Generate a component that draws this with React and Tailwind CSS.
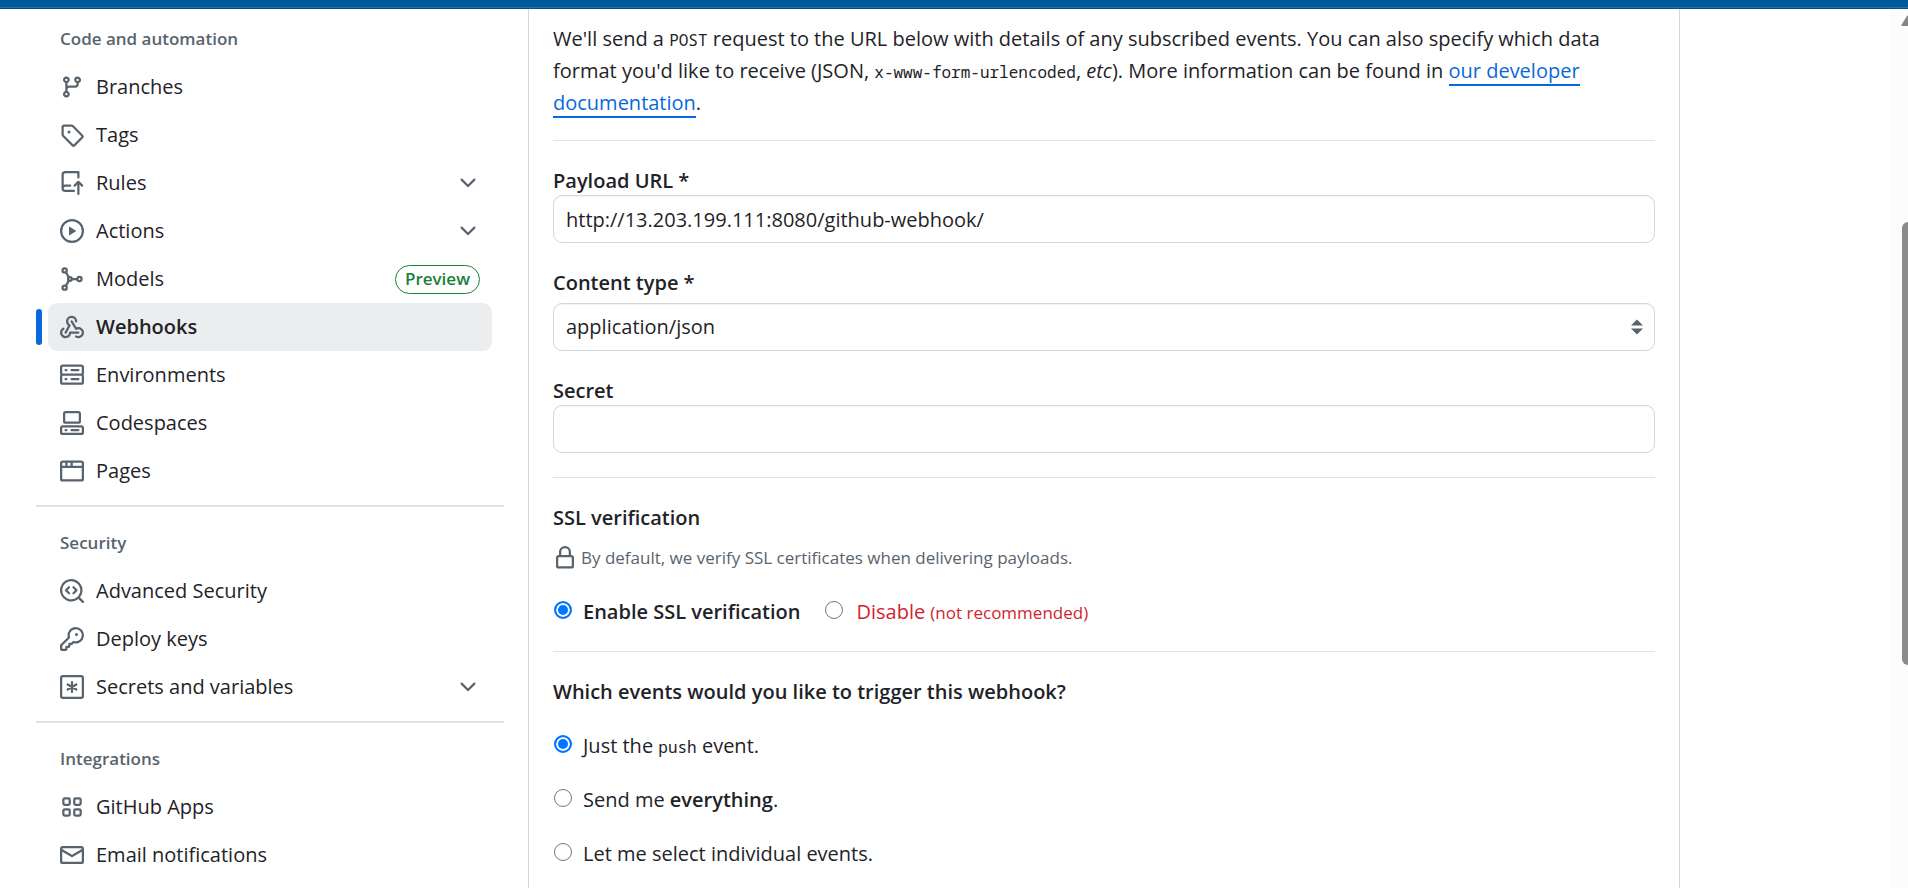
const ICONS = {
  branch: ['M9.5 3.25a2.25 2.25 0 1 1 3 2.122V6A2.5 2.5 0 0 1 10 8.5H6a1 1 0 0 0-1 1v1.128a2.251 2.251 0 1 1-1.5 0V5.372a2.25 2.25 0 1 1 1.5 0v1.836A2.493 2.493 0 0 1 6 7h4a1 1 0 0 0 1-1v-.628A2.25 2.25 0 0 1 9.5 3.25Zm-6 0a.75.75 0 1 0 1.5 0 .75.75 0 0 0-1.5 0Zm8.25-.75a.75.75 0 1 0 0 1.5.75.75 0 0 0 0-1.5ZM4.25 12a.75.75 0 1 0 0 1.5.75.75 0 0 0 0-1.5Z'],
  tag: ['M1 7.775V2.75C1 1.784 1.784 1 2.75 1h5.025c.464 0 .91.184 1.238.513l6.25 6.25a1.75 1.75 0 0 1 0 2.474l-5.026 5.026a1.75 1.75 0 0 1-2.474 0l-6.25-6.25A1.752 1.752 0 0 1 1 7.775Zm1.5 0c0 .066.026.13.073.177l6.25 6.25a.25.25 0 0 0 .354 0l5.025-5.025a.25.25 0 0 0 0-.354l-6.25-6.25a.25.25 0 0 0-.177-.073H2.75a.25.25 0 0 0-.25.25ZM6 5a1 1 0 1 1 0 2 1 1 0 0 1 0-2Z'],
  push: ['M1 2.5A2.5 2.5 0 0 1 3.5 0h8.75a.75.75 0 0 1 .75.75v3.5a.75.75 0 0 1-1.5 0V1.5h-8a1 1 0 0 0-1 1v6.708A2.493 2.493 0 0 1 3.5 9h3.25a.75.75 0 0 1 0 1.5H3.5a1 1 0 0 0 0 2h5.75a.75.75 0 0 1 0 1.5H3.5A2.5 2.5 0 0 1 1 11.5Zm13.23 7.79h-.001l-1.224-1.224v6.184a.75.75 0 0 1-1.5 0V9.066L10.28 10.29a.75.75 0 0 1-1.06-1.061l2.505-2.504a.75.75 0 0 1 1.06 0L15.29 9.23a.751.751 0 0 1-.018 1.042.751.751 0 0 1-1.042.018Z'],
  play: ['M8 0a8 8 0 1 1 0 16A8 8 0 0 1 8 0ZM1.5 8a6.5 6.5 0 1 0 13 0 6.5 6.5 0 0 0-13 0Zm4.879-2.773 4.264 2.559a.25.25 0 0 1 0 .428l-4.264 2.559A.25.25 0 0 1 6 10.559V5.442a.25.25 0 0 1 .379-.215Z'],
  webhook: [
    'M5.5 4.25a2.25 2.25 0 0 1 4.5 0 .75.75 0 0 0 1.5 0 3.75 3.75 0 1 0-6.14 2.889l-2.272 4.258a.75.75 0 0 0 1.324.706L7 7.25a.75.75 0 0 0-.309-1.015A2.25 2.25 0 0 1 5.5 4.25Z',
    'M7.364 3.607a.75.75 0 0 1 1.03.257l2.608 4.349a3.75 3.75 0 1 1-.628 6.785.75.75 0 0 1 .752-1.299 2.25 2.25 0 1 0-.033-3.88.75.75 0 0 1-1.03-.256L7.107 4.636a.75.75 0 0 1 .257-1.03Z',
    'M2.9 8.776A.75.75 0 0 1 2.625 9.8 2.25 2.25 0 1 0 6 11.75a.75.75 0 0 1 .75-.751h5.5a.75.75 0 0 1 0 1.5H7.425a3.751 3.751 0 1 1-5.55-3.998.75.75 0 0 1 1.024.274Z',
  ],
  server: ['M1.75 1h12.5c.966 0 1.75.784 1.75 1.75v4c0 .372-.116.717-.314 1 .198.283.314.628.314 1v4a1.75 1.75 0 0 1-1.75 1.75H1.75A1.75 1.75 0 0 1 0 12.75v-4c0-.358.109-.707.314-1a1.739 1.739 0 0 1-.314-1v-4C0 1.784.784 1 1.75 1ZM1.5 2.75v4c0 .138.112.25.25.25h12.5a.25.25 0 0 0 .25-.25v-4a.25.25 0 0 0-.25-.25H1.75a.25.25 0 0 0-.25.25Zm.25 5.75a.25.25 0 0 0-.25.25v4c0 .138.112.25.25.25h12.5a.25.25 0 0 0 .25-.25v-4a.25.25 0 0 0-.25-.25ZM7 4.75A.75.75 0 0 1 7.75 4h4.5a.75.75 0 0 1 0 1.5h-4.5A.75.75 0 0 1 7 4.75ZM7.75 10h4.5a.75.75 0 0 1 0 1.5h-4.5a.75.75 0 0 1 0-1.5ZM3 4.75A.75.75 0 0 1 3.75 4h.5a.75.75 0 0 1 0 1.5h-.5A.75.75 0 0 1 3 4.75ZM3.75 10h.5a.75.75 0 0 1 0 1.5h-.5a.75.75 0 0 1 0-1.5Z'],
  codespaces: [
    'M0 11.25c0-.966.784-1.75 1.75-1.75h12.5c.966 0 1.75.784 1.75 1.75v3A1.75 1.75 0 0 1 14.25 16H1.75A1.75 1.75 0 0 1 0 14.25Zm2-9.5C2 .784 2.784 0 3.75 0h8.5C13.216 0 14 .784 14 1.75v5a1.75 1.75 0 0 1-1.75 1.75h-8.5A1.75 1.75 0 0 1 2 6.75Zm1.75-.25a.25.25 0 0 0-.25.25v5c0 .138.112.25.25.25h8.5a.25.25 0 0 0 .25-.25v-5a.25.25 0 0 0-.25-.25Zm-2 9.5a.25.25 0 0 0-.25.25v3c0 .138.112.25.25.25h12.5a.25.25 0 0 0 .25-.25v-3a.25.25 0 0 0-.25-.25Z',
    'M7 12.75a.75.75 0 0 1 .75-.75h4.5a.75.75 0 0 1 0 1.5h-4.5a.75.75 0 0 1-.75-.75Zm-4 0a.75.75 0 0 1 .75-.75h.5a.75.75 0 0 1 0 1.5h-.5a.75.75 0 0 1-.75-.75Z',
  ],
  browser: ['M0 2.75C0 1.784.784 1 1.75 1h12.5c.966 0 1.75.784 1.75 1.75v10.5A1.75 1.75 0 0 1 14.25 15H1.75A1.75 1.75 0 0 1 0 13.25ZM14.5 6h-13v7.25c0 .138.112.25.25.25h12.5a.25.25 0 0 0 .25-.25Zm-6-3.5v2h6V2.75a.25.25 0 0 0-.25-.25ZM5 2.5v2h2v-2Zm-3.25 0a.25.25 0 0 0-.25.25V4.5h2v-2Z'],
  codescan: [
    'M8.47 4.97a.75.75 0 0 0 0 1.06L9.94 7.5 8.47 8.97a.75.75 0 1 0 1.06 1.06l2-2a.75.75 0 0 0 0-1.06l-2-2a.75.75 0 0 0-1.06 0ZM6.53 6.03a.75.75 0 0 0-1.06-1.06l-2 2a.75.75 0 0 0 0 1.06l2 2a.75.75 0 1 0 1.06-1.06L5.06 7.5l1.47-1.47Z',
    'M12.246 13.307a7.501 7.501 0 1 1 1.06-1.06l2.474 2.473a.749.749 0 1 1-1.06 1.06ZM1.5 7.5a6.002 6.002 0 0 0 3.608 5.504 6.002 6.002 0 0 0 6.486-1.117.748.748 0 0 1 .292-.293A6 6 0 1 0 1.5 7.5Z',
  ],
  key: ['M10.5 0a5.499 5.499 0 1 1-1.288 10.848l-.932.932a.749.749 0 0 1-.53.22H7v.75a.749.749 0 0 1-.22.53l-.5.5a.749.749 0 0 1-.53.22H5v.75a.749.749 0 0 1-.22.53l-.5.5a.749.749 0 0 1-.53.22h-2A1.75 1.75 0 0 1 0 14.25v-2c0-.199.079-.389.22-.53l4.932-4.932A5.5 5.5 0 0 1 10.5 0Zm-4 5.5c-.001.431.069.86.205 1.269a.75.75 0 0 1-.181.768L1.5 12.56v1.69c0 .138.112.25.25.25h1.69l.06-.06v-1.19a.75.75 0 0 1 .75-.75h1.19l.06-.06v-1.19a.75.75 0 0 1 .75-.75h1.19l1.023-1.025a.75.75 0 0 1 .768-.18A4 4 0 1 0 6.5 5.5ZM11 6a1 1 0 1 1 0-2 1 1 0 0 1 0 2Z'],
  mail: ['M1.75 2h12.5c.966 0 1.75.784 1.75 1.75v8.5A1.75 1.75 0 0 1 14.25 14H1.75A1.75 1.75 0 0 1 0 12.25v-8.5C0 2.784.784 2 1.75 2ZM1.5 12.251c0 .138.112.25.25.25h12.5a.25.25 0 0 0 .25-.25V5.809L8.38 9.397a.75.75 0 0 1-.76 0L1.5 5.809v6.442Zm13-8.181v-.32a.25.25 0 0 0-.25-.25H1.75a.25.25 0 0 0-.25.25v.32L8 7.88Z'],
  lock: ['M4 4a4 4 0 0 1 8 0v2h.25c.966 0 1.75.784 1.75 1.75v5.5A1.75 1.75 0 0 1 12.25 15h-8.5A1.75 1.75 0 0 1 2 13.25v-5.5C2 6.784 2.784 6 3.75 6H4Zm8.25 3.5h-8.5a.25.25 0 0 0-.25.25v5.5c0 .138.112.25.25.25h8.5a.25.25 0 0 0 .25-.25v-5.5a.25.25 0 0 0-.25-.25ZM10.5 6V4a2.5 2.5 0 1 0-5 0v2Z'],
  chevron: ['M12.78 5.22a.749.749 0 0 1 0 1.06l-4.25 4.25a.749.749 0 0 1-1.06 0L3.22 6.28a.749.749 0 1 1 1.06-1.06L8 8.939l3.72-3.719a.749.749 0 0 1 1.06 0Z'],
};

const STROKED = {
  models: (
    <>
      <circle cx="3.1" cy="2.25" r="1.4" />
      <circle cx="3.1" cy="13.75" r="1.4" />
      <circle cx="6.6" cy="8" r="1.25" />
      <circle cx="13" cy="8" r="1.4" />
      <path d="M3.9 3.5 5.9 6.9M3.9 12.5 5.9 9.1M7.9 8h3.7" />
    </>
  ),
  asterisk: (
    <>
      <rect x=".75" y=".75" width="14.5" height="14.5" rx="1.25" />
      <path strokeLinecap="round" d="M8 4.75v6.5M5.1 6.3l5.8 3.4M10.9 6.3 5.1 9.7" />
    </>
  ),
  apps: (
    <>
      <rect x="2.25" y="2.25" width="4.25" height="4.25" rx=".9" />
      <rect x="9.5" y="2.25" width="4.25" height="4.25" rx=".9" />
      <rect x="2.25" y="9.5" width="4.25" height="4.25" rx=".9" />
      <rect x="9.5" y="9.5" width="4.25" height="4.25" rx=".9" />
    </>
  ),
};

function Icon({ name, className = 'size-6' }) {
  if (STROKED[name]) {
    return (
      <svg viewBox="0 0 16 16" className={`shrink-0 ${className}`} fill="none" stroke="currentColor" strokeWidth="1.5" aria-hidden="true">
        {STROKED[name]}
      </svg>
    );
  }
  return (
    <svg viewBox="0 0 16 16" className={`shrink-0 ${className}`} fill="currentColor" aria-hidden="true">
      {ICONS[name].map((d) => (
        <path key={d} d={d} />
      ))}
    </svg>
  );
}

const SECTIONS = [
  {
    title: 'Code and automation',
    items: [
      { label: 'Branches', icon: 'branch' },
      { label: 'Tags', icon: 'tag' },
      { label: 'Rules', icon: 'push', expandable: true },
      { label: 'Actions', icon: 'play', expandable: true },
      { label: 'Models', icon: 'models', badge: 'Preview' },
      { label: 'Webhooks', icon: 'webhook', active: true },
      { label: 'Environments', icon: 'server' },
      { label: 'Codespaces', icon: 'codespaces' },
      { label: 'Pages', icon: 'browser' },
    ],
  },
  {
    title: 'Security',
    items: [
      { label: 'Advanced Security', icon: 'codescan' },
      { label: 'Deploy keys', icon: 'key' },
      { label: 'Secrets and variables', icon: 'asterisk', expandable: true },
    ],
  },
  {
    title: 'Integrations',
    items: [
      { label: 'GitHub Apps', icon: 'apps' },
      { label: 'Email notifications', icon: 'mail' },
    ],
  },
];

function NavItem({ item }) {
  const row = 'flex h-12 w-full items-center gap-3 rounded-[9px] px-3 text-left';
  const content = (
    <>
      <span className="text-[#59636e]">
        <Icon name={item.icon} />
      </span>
      <span className="grow">{item.label}</span>
    </>
  );
  if (item.expandable) {
    return (
      <li className="mx-3">
        <button type="button" aria-expanded="false" className={row}>
          {content}
          <span className="text-[#59636e]">
            <Icon name="chevron" />
          </span>
        </button>
      </li>
    );
  }
  return (
    <li className="relative mx-3">
      {item.active && <span className="absolute top-1.5 -left-3 h-9 w-1.5 rounded-[6px] bg-[#0969da]" />}
      <a href="#" aria-current={item.active ? 'page' : undefined} className={`${row} ${item.active ? 'bg-[#ecedef] font-semibold' : ''}`}>
        {content}
        {item.badge && (
          <span className="flex h-[29px] items-center rounded-full border border-[#1a7f37] px-[9px] text-[17px] font-semibold text-[#1a7f37]">
            {item.badge}
          </span>
        )}
      </a>
    </li>
  );
}

function Sidebar() {
  return (
    <nav aria-label="Settings" className="w-[468px] shrink-0">
      {SECTIONS.map((section, index) => (
        <section key={section.title} className={index > 0 ? 'mt-2.5 border-t-2 border-[#dfe3e8] pt-6' : 'pt-[18px]'}>
          <h3 className="mb-3 ml-6 text-[17px] leading-6 font-semibold text-[#59636e]">{section.title}</h3>
          <ul>
            {section.items.map((item) => (
              <NavItem key={item.label} item={item} />
            ))}
          </ul>
        </section>
      ))}
    </nav>
  );
}

const FIELD = 'block h-12 w-full rounded-[9px] border border-[#d1d9e0] bg-white px-3 shadow-[inset_0_1px_1px_rgba(31,35,40,0.05)]';
const LABEL = 'block leading-7 font-semibold';
const CODE = "font-['Noto_Sans_Mono','DejaVu_Sans_Mono',monospace] text-[16px] leading-none";

function Radio({ id, name, defaultChecked }) {
  return (
    <input
      id={id}
      type="radio"
      name={name}
      defaultChecked={defaultChecked}
      className="mx-px mt-[5px] size-[18px] shrink-0 appearance-none rounded-full border border-[#767676] bg-white checked:border-2 checked:border-[#0075ff] checked:bg-[#0075ff] checked:shadow-[inset_0_0_0_2px_white]"
    />
  );
}

function WebhookForm() {
  return (
    <form className="pt-3.5">
      <p className="leading-8">
        We'll send a <code className={CODE}>POST</code> request to the URL below with details of any subscribed events. You can also specify which data
        format you'd like to receive (JSON, <code className={CODE}>x-www-form-urlencoded</code>, <em>etc</em>). More information can be found in{' '}
        <a href="#" className="border-b-2 border-[#0969da] text-[#0969da]">
          our developer documentation
        </a>
        .
      </p>
      <hr className="mt-[21px] border-[#dfe3e8]" />

      <div className="pt-[26px]">
        <label htmlFor="payload" className={LABEL}>
          Payload URL *
        </label>
        <input id="payload" type="text" defaultValue="http://13.203.199.111:8080/github-webhook/" className={FIELD} />
      </div>

      <div className="pt-[26px]">
        <label htmlFor="content-type" className={`${LABEL} mb-1.5`}>
          Content type *
        </label>
        <div className="relative">
          <select id="content-type" className={`${FIELD} appearance-none`}>
            <option>application/json</option>
            <option>application/x-www-form-urlencoded</option>
          </select>
          <svg viewBox="0 0 12 16" className="pointer-events-none absolute top-4 right-3 h-4 w-3" fill="#59636e" aria-hidden="true">
            <path d="M6 .5 12 6.5H0ZM6 15.5l6-6H0Z" />
          </svg>
        </div>
      </div>

      <div className="pt-[26px]">
        <label htmlFor="secret" className={LABEL}>
          Secret
        </label>
        <input id="secret" type="text" className={FIELD} />
      </div>
      <hr className="mt-6 border-[#dfe3e8]" />

      <fieldset aria-labelledby="ssl-title" className="pt-6">
        <h4 id="ssl-title" className="leading-8 font-semibold">
          SSL verification
        </h4>
        <p className="mt-2 flex items-center gap-1 text-[17px] leading-8 text-[#59636e]">
          <Icon name="lock" /> By default, we verify SSL certificates when delivering payloads.
        </p>
        <div className="mt-[22px] flex gap-6">
          <div className="flex gap-2.5">
            <Radio id="ssl-on" name="ssl" defaultChecked />
            <label htmlFor="ssl-on" className="leading-8 font-semibold">
              Enable SSL verification
            </label>
          </div>
          <div className="flex gap-3">
            <Radio id="ssl-off" name="ssl" />
            <label htmlFor="ssl-off" className="leading-8 text-[#d1242f]">
              Disable <span className="text-[17px]">(not recommended)</span>
            </label>
          </div>
        </div>
      </fieldset>
      <hr className="mt-[22px] border-[#dfe3e8]" />

      <fieldset aria-labelledby="events-title" className="pt-6">
        <h4 id="events-title" className="leading-8 font-semibold">
          Which events would you like to trigger this webhook?
        </h4>
        <div className="mt-[22px] flex flex-col gap-[22px]">
          <div className="flex gap-2.5">
            <Radio id="ev-push" name="events" defaultChecked />
            <label htmlFor="ev-push" className="leading-8">
              Just the <code className={CODE}>push</code> event.
            </label>
          </div>
          <div className="flex gap-2.5">
            <Radio id="ev-all" name="events" />
            <label htmlFor="ev-all" className="leading-8">
              Send me <strong className="font-semibold">everything</strong>.
            </label>
          </div>
          <div className="flex gap-2.5">
            <Radio id="ev-some" name="events" />
            <label htmlFor="ev-some" className="leading-8">
              Let me select individual events.
            </label>
          </div>
        </div>
      </fieldset>
    </form>
  );
}

export default function App() {
  return (
    <div className="flex h-screen flex-col overflow-hidden bg-white font-['Open_Sans','Noto_Sans',sans-serif] text-[20px] text-[#1f2328]">
      <header className="h-[9px] shrink-0 border-b border-[#00508a] bg-[#005a9a] pt-[7px]">
        <div className="h-px bg-[#2573ab]" />
      </header>
      <div className="flex min-h-0 grow">
        <div className="flex min-w-0 grow gap-6 overflow-hidden pl-9">
          <Sidebar />
          <main className="mr-[210px] min-w-0 grow self-stretch border-x border-[#d1d9e0] px-6">
            <WebhookForm />
          </main>
        </div>
        <div className="relative w-[18px] shrink-0 overflow-hidden bg-[#fcfcfc]" aria-hidden="true">
          <svg viewBox="0 0 14 11" className="absolute top-1.5 left-[11px] h-[11px] w-3.5" fill="#858585">
            <path d="M6 1Q7 0 8 1L14 10.500Q14 11 13 11H1Q0 11 .4 10Z" />
          </svg>
          <div className="absolute top-[213px] left-3 h-[443px] w-3 rounded-full bg-[#8b8b8b]" />
        </div>
      </div>
    </div>
  );
}
